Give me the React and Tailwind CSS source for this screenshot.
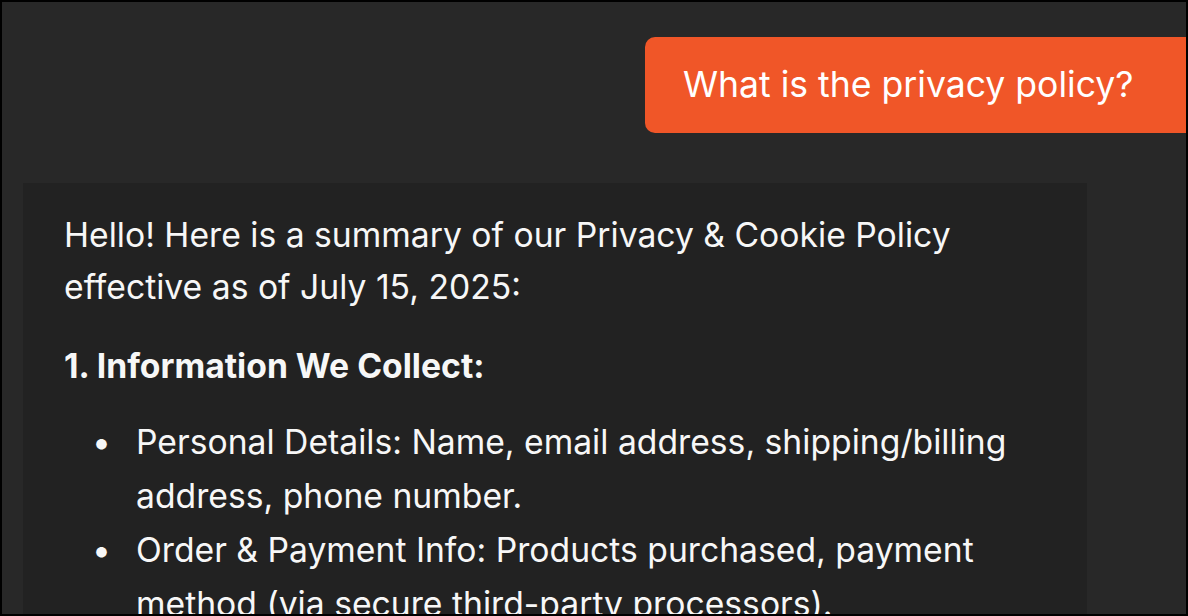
export default function App() {
    const items = [
        "Personal Details: Name, email address, shipping/billing address, phone number.",
        "Order & Payment Info: Products purchased, payment method (via secure third-party processors).",
    ];

    return (
        <div
            className="w-[1188px] h-[616px] overflow-hidden border-2 border-black bg-[#282828] text-[#f7f7f7]"
            style={{ fontFamily: "Inter, 'Noto Sans', sans-serif" }}
        >
            {/* User message */}
            <div className="flex justify-end pt-[35px]">
                <div className="w-[541px] h-[96px] shrink-0 flex items-center pl-[38px] bg-[#f05628] rounded-l-[10px] text-[35.6px] leading-none text-white">
                    What is the privacy policy?
                </div>
            </div>

            {/* Assistant reply */}
            <div className="mt-[50px] ml-[21px] mr-[99px] bg-[#222222] pl-[41px] pr-[40px] pt-[26px] pb-[40px]">
                <p className="text-[33.7px] leading-[52px]">
                    Hello! Here is a summary of our Privacy &amp; Cookie Policy effective as of July 15, 2025:
                </p>
                <h3 className="mt-[27px] text-[33.7px] leading-[52px] font-bold">
                    1. Information We Collect:
                </h3>
                <ul className="mt-[23px]">
                    {items.map((item, index) => (
                        <li key={index} className="flex text-[33.7px] leading-[54px]">
                            <span className="w-[72px] shrink-0 pl-[28px]">•</span>
                            <span>{item}</span>
                        </li>
                    ))}
                </ul>
            </div>
        </div>
    );
}
